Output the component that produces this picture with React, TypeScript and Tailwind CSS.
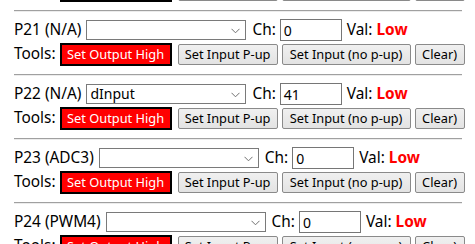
import React from 'react';

interface PinRow {
    pin: string;
    mode: string;
    ch: string;
}

const rows: PinRow[] = [
    { pin: 'P20 (N/A)', mode: '', ch: '0' },
    { pin: 'P21 (N/A)', mode: '', ch: '0' },
    { pin: 'P22 (N/A)', mode: 'dInput', ch: '41' },
    { pin: 'P23 (ADC3)', mode: '', ch: '0' },
    { pin: 'P24 (PWM4)', mode: '', ch: '0' },
];

const Chevron = () => (
    <svg width="9" height="6" viewBox="0 0 9 6" className="absolute right-[5px] top-[7px]">
        <polyline points="0.5,0.8 4.5,4.8 8.5,0.8" fill="none" stroke="#707070" strokeWidth="1" />
    </svg>
);

const GrayButton = ({ label, w }: { label: string; w: string }) => (
    <button
        className={`h-[21px] ${w} shrink-0 border border-[#8a8a8a] bg-gradient-to-b from-[#f0f0f0] to-[#e3e3e3] text-[12.8px] leading-none text-black rounded-[2px]`}>
        {label}
    </button>
);

const Row = ({ row }: { row: PinRow }) => (
    <div className="w-[448px]">
        <div className="h-[2px] border-t border-t-[#a0a0a0] border-b border-b-[#ececec]" />
        <div className="pt-[6px] pb-[8px]">
            <div className="flex h-[24px] items-center text-[15.4px] text-black">
                <span className="whitespace-nowrap">{row.pin}</span>
                <div className="relative ml-[5px] h-[20px] w-[160px] shrink-0 border border-[#7a7a7a] bg-white">
                    <span className="absolute left-[3px] top-[0px] text-[14px] leading-[18px]">{row.mode}</span>
                    <Chevron />
                </div>
                <span className="ml-[6px]">Ch:</span>
                <div className="ml-[4px] flex h-[22px] w-[62px] shrink-0 items-center border border-[#767676] bg-white pl-[3px] text-[14px]">
                    {row.ch}
                </div>
                <span className="ml-[5px] whitespace-nowrap">
                    Val: <span className="font-bold text-[#ff0000]">Low</span>
                </span>
            </div>
            <div className="flex h-[24px] items-center text-[15.4px] text-black">
                <span>Tools:</span>
                <button className="ml-[4px] h-[23px] w-[112px] shrink-0 border-2 border-black bg-[#ff0000] text-[12.8px] leading-none text-white">
                    Set Output High
                </button>
                <div className="ml-[6px] flex items-center gap-[4px]">
                    <GrayButton label="Set Input P-up" w="w-[100px]" />
                    <GrayButton label="Set Input (no p-up)" w="w-[129px]" />
                    <GrayButton label="Clear)" w="w-[50px]" />
                </div>
            </div>
        </div>
    </div>
);

export default function App() {
    return (
        <div className="h-[244px] w-[475px] overflow-hidden bg-white" style={{ fontFamily: '"Noto Sans", sans-serif' }}>
            <div className="-mt-[54px] pl-[14px]">
                {rows.map((r) => (
                    <Row key={r.pin} row={r} />
                ))}
            </div>
        </div>
    );
}
